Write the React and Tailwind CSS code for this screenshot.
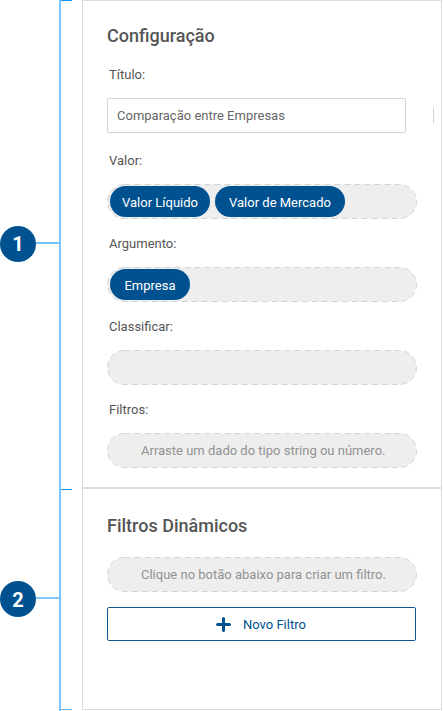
const font = "font-[Roboto,'Liberation_Sans',sans-serif]";

function Marker({ line, label, children }) {
  return (
    <div className="flex h-9 items-center">
      <div className="flex size-9 shrink-0 items-center justify-center rounded-full bg-[#00518f] text-[20px] leading-6 font-bold text-white">
        <span className={label}>{children}</span>
      </div>
      <div className={`mb-[2px] h-[2px] w-6 ${line}`} />
    </div>
  );
}

function DropZone({ children }) {
  return (
    <div className="relative flex h-[35px] w-[310px] items-center">
      <svg className="absolute inset-0" width="310" height="35" fill="none">
        <rect x="0.5" y="0.5" width="309" height="34" rx="17" fill="#eeeeee" stroke="#ced4d9" strokeDasharray="6 4" />
      </svg>
      <div className="relative flex w-full items-center">{children}</div>
    </div>
  );
}

function Chip({ className, children }) {
  return (
    <span
      className={`${className} -mt-px flex h-[31px] items-center justify-center rounded-full bg-[#00518f] pt-[3px] text-[13px] leading-4 text-white`}
    >
      {children}
    </span>
  );
}

function Field({ label, children }) {
  return (
    <div className="flex h-[83px] flex-col justify-end gap-[15px]">
      <label className="pl-[2px] text-[13px] leading-4 text-[#555555]">{label}</label>
      {children}
    </div>
  );
}

function Hint({ children }) {
  return <span className="w-full pl-[34px] text-[13px] whitespace-nowrap text-[#929292]">{children}</span>;
}

export default function App() {
  return (
    <div className={`${font} flex h-[711px] w-[443px] overflow-hidden bg-white`}>
      <aside className="flex w-[59px] shrink-0 flex-col pt-[226px]">
        <Marker line="bg-[#74c2fc]" label="">1</Marker>
        <div className="h-[319px]" />
        <Marker line="bg-[#84c9fc]" label="pt-[2px]">2</Marker>
      </aside>

      <div className="flex w-[23px] shrink-0 flex-col">
        <div className="h-[490px] w-[13px] border-l-2 border-[#7cc4fe]">
          <div className="h-px bg-[#1593f7]" />
          <div className="h-[488px]" />
          <div className="h-px bg-[#1593f7]" />
        </div>
        <div className="h-[221px] w-[13px] border-l-2 border-[#7cc4fe]">
          <div className="h-[219px]" />
          <div className="h-px bg-[#5fb5fa]" />
        </div>
      </div>

      <main className="flex h-[710px] w-[360px] shrink-0 flex-col border border-[#dddddd]">
        <section className="flex h-[488px] flex-col border-b-2 border-[#dddddd] pl-6">
          <h2 className="mt-[23px] text-[18px] leading-6 font-medium text-[#555555]">Configuração</h2>
          <label className="mt-[19px] pl-[2px] text-[13px] leading-4 text-[#555555]">Título:</label>
          <div className="mt-[15px] flex items-center">
            <div className="flex h-[35px] w-[299px] items-center rounded-[2px] border border-[#ced4da] pl-[9px] text-[13px] text-[#666666]">
              Comparação entre Empresas
            </div>
            <div className="ml-[27px] h-[15px] w-px bg-[#ced4da]" />
          </div>
          <div className="mt-[3px] flex flex-col">
            <Field label="Valor:">
              <DropZone>
                <Chip className="ml-[3px] w-[100px]">Valor Líquido</Chip>
                <Chip className="ml-[5px] w-[130px]">Valor de Mercado</Chip>
              </DropZone>
            </Field>
            <Field label="Argumento:">
              <DropZone>
                <Chip className="ml-[3px] w-20">Empresa</Chip>
              </DropZone>
            </Field>
            <Field label="Classificar:">
              <DropZone />
            </Field>
            <Field label="Filtros:">
              <DropZone>
                <Hint>Arraste um dado do tipo string ou número.</Hint>
              </DropZone>
            </Field>
          </div>
        </section>

        <section className="flex flex-col pl-6">
          <h2 className="mt-[25px] mb-[19px] text-[18px] leading-6 font-medium text-[#555555]">Filtros Dinâmicos</h2>
          <DropZone>
            <Hint>Clique no botão abaixo para criar um filtro.</Hint>
          </DropZone>
          <button className="mt-[15px] flex h-[34px] w-[309px] items-center rounded-[2px] border border-[#0f5795] pl-[108px] text-[13px] text-[#00518f]">
            <svg width="15" height="15" viewBox="0 0 15 15" stroke="currentColor" strokeWidth="3" strokeLinecap="round">
              <path d="M7.5 1.5v12M1.5 7.5h12" />
            </svg>
            <span className="ml-3 pt-px">Novo Filtro</span>
          </button>
        </section>
      </main>
    </div>
  );
}
